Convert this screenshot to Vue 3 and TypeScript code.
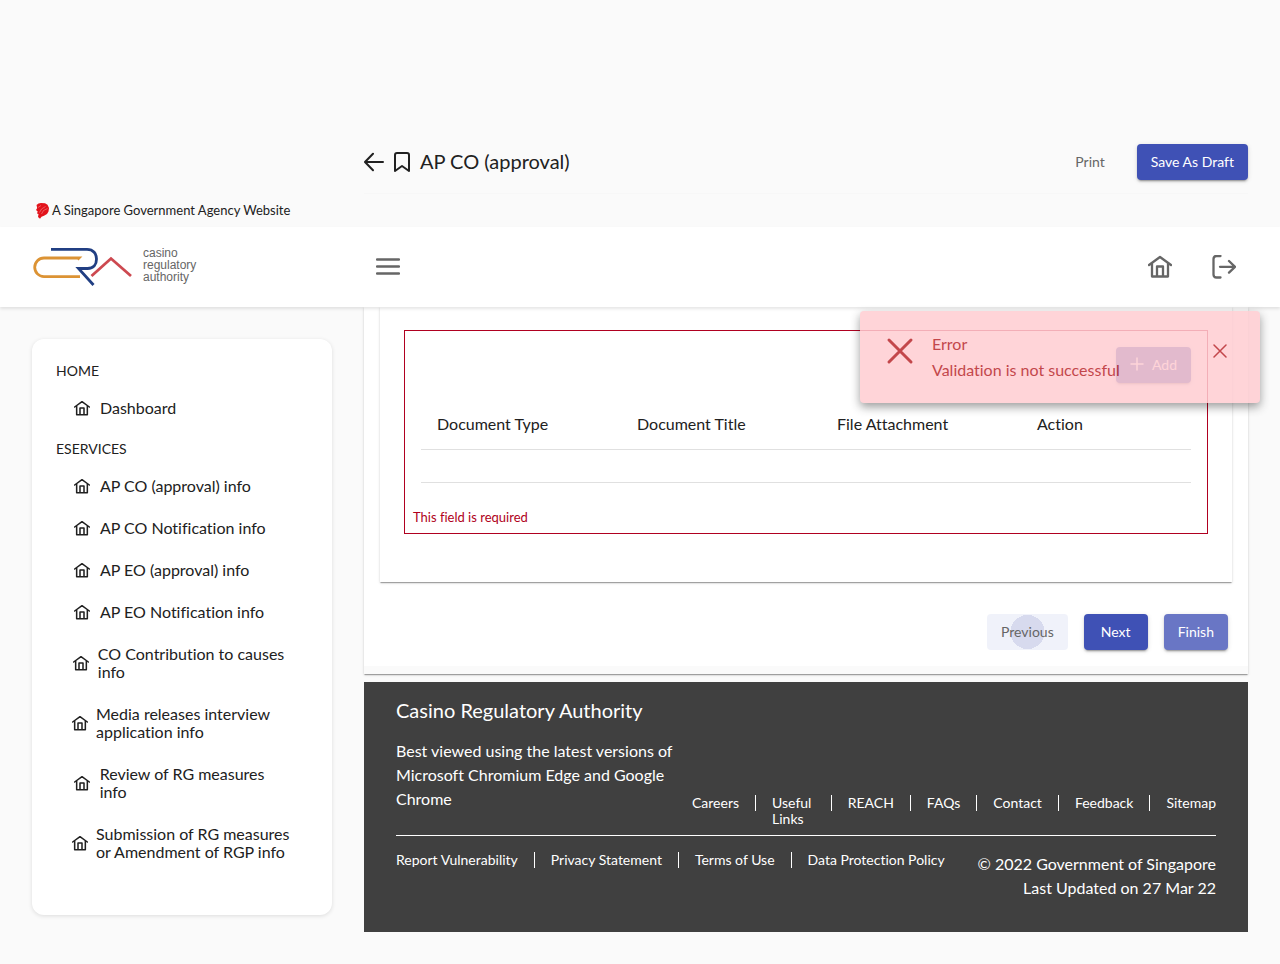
<script setup lang="ts">
import { ref } from 'vue'

interface MenuGroup {
  title: string
  items: string[]
}

const groups: MenuGroup[] = [
  { title: 'HOME', items: ['Dashboard'] },
  {
    title: 'ESERVICES',
    items: [
      'AP CO (approval) info',
      'AP CO Notification info',
      'AP EO (approval) info',
      'AP EO Notification info',
      'CO Contribution to causes info',
      'Media releases interview application info',
      'Review of RG measures info',
      'Submission of RG measures or Amendment of RGP info',
    ],
  },
]

const columns: string[] = ['Document Type', 'Document Title', 'File Attachment', 'Action']
const siteLinks: string[] = ['Careers', 'Useful Links', 'REACH', 'FAQs', 'Contact', 'Feedback', 'Sitemap']
const legalLinks: string[] = ['Report Vulnerability', 'Privacy Statement', 'Terms of Use', 'Data Protection Policy']

const toastOpen = ref(true)
</script>

<template>
  <div class="page">
    <div class="titlebar">
      <button class="icon-btn" type="button" aria-label="Back">
        <svg width="20" height="20" viewBox="0 0 20 20"><path d="M19 10H1.5M9 1.800L1 10l8 8.200" /></svg>
      </button>
      <button class="icon-btn bookmark" type="button" aria-label="Bookmark">
        <svg width="16" height="20" viewBox="0 0 16 20"><path d="M1 19V3q0-2 2-2h10q2 0 2 2v16l-7-5z" /></svg>
      </button>
      <h1>AP CO (approval)</h1>
      <div class="title-actions">
        <button class="btn flat" type="button">Print</button>
        <button class="btn primary" type="button">Save As Draft</button>
      </div>
    </div>

    <div class="agency">
      <svg width="16" height="18" viewBox="0 0 16 18" aria-hidden="true">
        <path fill="#e2131b" d="M1.500 3l2-1.500L6 1l4 .3 2.500 1.500L14 6l-.5 3.500-1.500 2.500-3 1.700-2.500 1-1.500 2-2-1.700.5-3-1.500-.5.700-2L1 8l1.200-2z" />
        <path fill="none" stroke="#fff" stroke-opacity=".6" stroke-width=".5" d="M3 5.500l3-2M4.500 10.500l2-3.500 4-2.500M6.500 12l2-3.500 4-2" />
      </svg>
      <a href="#">A Singapore Government Agency Website</a>
    </div>

    <header class="header">
      <a href="#" class="logo" aria-label="Casino Regulatory Authority">
        <svg width="168" height="44" viewBox="0 0 168 44">
          <g fill="none" stroke-width="2.800">
            <path stroke="#dc9334" d="M45.500 14.500l1.500-1.500H12a9.300 9.300 0 0 0 0 18.600H48" />
            <path stroke="#213f83" d="M19 4.300H55C61.500 4.300 64.500 9 64.500 14s-2.500 9.500-9 9.500H46.500L61.500 40" />
            <path stroke="#cd4950" d="M59.500 31L79 13.500 99 31" />
          </g>
          <g class="logo-text">
            <text x="111" y="12">casino</text>
            <text x="111" y="24">regulatory</text>
            <text x="111" y="36">authority</text>
          </g>
        </svg>
      </a>
      <button class="icon-btn menu" type="button" aria-label="Menu">
        <svg width="24" height="24" viewBox="0 0 24 24"><path d="M1 4.500h22M1 11.500h22M1 18.500h22" /></svg>
      </button>
      <div class="header-actions">
        <button class="icon-btn" type="button" aria-label="Home">
          <svg width="24" height="24" viewBox="0 0 24 24"><path d="M1 10L12 2l11 8M4 8.500V21.500h16V8.500M9 21V11.500h6V21" /></svg>
        </button>
        <button class="icon-btn" type="button" aria-label="Log out">
          <svg width="24" height="24" viewBox="0 0 24 24"><path d="M8.500 1H4.500Q1.500 1 1.500 4v15.500q0 3 3 3h4M8 11.800h15M17 6l6 5.800-6 5.800" /></svg>
        </button>
      </div>
    </header>

    <div class="body">
      <nav class="sidebar">
        <section v-for="g in groups" :key="g.title">
          <h2>{{ g.title }}</h2>
          <ul>
            <li v-for="item in g.items" :key="item">
              <a href="#">
                <span class="side-icon">
                  <svg width="16" height="16" viewBox="0 0 24 24"><path d="M1 10.500L12 2.500l11 8M4 9v13h16V9M9 22V12h6v10" /></svg>
                </span>
                <span>{{ item }}</span>
              </a>
            </li>
          </ul>
        </section>
      </nav>

      <div class="content">
        <main class="panel">
          <div class="card">
            <div class="field">
              <div class="add-row">
                <button class="btn primary add" type="button">
                  <svg width="14" height="14" viewBox="0 0 14 14"><path d="M7 1v12M1 7h12" /></svg>
                  Add
                </button>
              </div>
              <table>
                <thead>
                  <tr><th v-for="c in columns" :key="c" scope="col">{{ c }}</th></tr>
                </thead>
                <tbody>
                  <tr><td colspan="4"></td></tr>
                </tbody>
              </table>
              <p class="error">This field is required</p>
            </div>
          </div>
          <div class="steps">
            <button class="btn previous" type="button">Previous</button>
            <button class="btn primary" type="button">Next</button>
            <button class="btn primary light" type="button">Finish</button>
          </div>
        </main>

        <footer class="footer">
          <h2>Casino Regulatory Authority</h2>
          <div class="foot-top">
            <p>Best viewed using the latest versions of Microsoft Chromium Edge and Google Chrome</p>
            <ul class="links">
              <li v-for="l in siteLinks" :key="l"><a href="#">{{ l }}</a></li>
            </ul>
          </div>
          <div class="foot-bottom">
            <ul class="links">
              <li v-for="l in legalLinks" :key="l"><a href="#">{{ l }}</a></li>
            </ul>
            <p class="copy">© 2022 Government of Singapore<br />Last Updated on 27 Mar 22</p>
          </div>
        </footer>

      </div>
      <div v-if="toastOpen" class="toast" role="alert">
        <svg class="toast-icon" width="28" height="28" viewBox="0 0 28 28" aria-hidden="true"><path d="M3 3l22 22M25 3L3 25" /></svg>
        <div class="toast-text">
          <div>Error</div>
          <div>Validation is not successful</div>
        </div>
        <button class="icon-btn toast-close" type="button" aria-label="Close" @click="toastOpen = false">
          <svg width="14" height="14" viewBox="0 0 14 14"><path d="M1 1l12 12M13 1L1 13" /></svg>
        </button>
      </div>
    </div>
  </div>
</template>

<style>
body {
  margin: 0;
  background: #fafafa;
}
</style>

<style scoped>
.page {
  box-sizing: border-box;
  min-height: 100vh;
  padding-top: 144px;
  font-family: Lato, "Liberation Sans", sans-serif;
  font-size: 16px;
  font-variant-ligatures: none;
  color: #212121;
}
h1, h2, p, ul {
  margin: 0;
  padding: 0;
  font-weight: 400;
}
ul {
  list-style: none;
}
a {
  color: inherit;
  text-decoration: none;
}
svg {
  display: block;
  flex-shrink: 0;
}
.icon-btn {
  padding: 0;
  border: 0;
  background: none;
  color: inherit;
  cursor: pointer;
}
.icon-btn path, .side-icon path, .add path, .toast-icon path {
  fill: none;
  stroke: currentColor;
  stroke-width: 2;
  stroke-linecap: round;
  stroke-linejoin: round;
}
.header .icon-btn path, .side-icon path {
  stroke-width: 2.3;
}
.add path, .toast-close path {
  stroke-width: 1.5;
}
.titlebar {
  display: flex;
  align-items: center;
  margin: 0 32px 0 364px;
  padding-bottom: 13px;
  border-bottom: 1px solid #f7f7f7;
}
.bookmark {
  margin: 0 10px;
}
h1 {
  padding-bottom: 2px;
  font-size: 20px;
  line-height: 32px;
}
.title-actions {
  display: flex;
  gap: 18px;
  margin-left: auto;
}
.btn {
  display: inline-flex;
  align-items: center;
  justify-content: center;
  height: 36px;
  min-width: 64px;
  padding: 0 14px 2px;
  border: 0;
  border-radius: 4px;
  background: none;
  color: #666;
  font-family: inherit;
  font-size: 14px;
  font-variant-ligatures: inherit;
  white-space: nowrap;
  cursor: pointer;
}
.title-actions .flat {
  min-width: 0;
}
.primary {
  background: #3f51b5;
  color: #fff;
  box-shadow: 0 3px 1px -2px rgba(0, 0, 0, 0.2), 0 2px 2px rgba(0, 0, 0, 0.14), 0 1px 5px rgba(0, 0, 0, 0.12);
}
.light {
  background: #6976c5;
}
.previous {
  background: radial-gradient(circle at center, #d7daee 17px, #f0f2fa 17px);
}
.agency {
  display: flex;
  align-items: center;
  gap: 1px;
  height: 33px;
  padding-left: 35px;
  font-size: 13px;
}
.agency a {
  padding-bottom: 2px;
}
.header {
  position: relative;
  z-index: 2;
  display: flex;
  align-items: center;
  height: 80px;
  padding: 0 44px 0 32px;
  background: #fff;
  color: #666;
  box-shadow: 0 2px 3px rgba(0, 0, 0, 0.1);
}
.logo {
  width: 344px;
}
.logo-text {
  fill: #666;
  font-family: "Liberation Sans", sans-serif;
  font-size: 12px;
}
.header-actions {
  display: flex;
  gap: 40px;
  margin-left: auto;
}
.body {
  position: relative;
  display: flex;
  align-items: flex-start;
  gap: 32px;
  padding: 0 32px 32px;
}
.sidebar {
  box-sizing: border-box;
  flex: none;
  width: 300px;
  margin-top: 32px;
  padding: 12px 24px 42px;
  border-radius: 12px;
  background: #fff;
  box-shadow: 0 1px 4px rgba(0, 0, 0, 0.12);
}
.sidebar h2 {
  padding: 12px 0 8px;
  font-size: 14px;
  line-height: 16px;
}
.sidebar a {
  display: flex;
  align-items: center;
  padding: 12px 16px;
  line-height: 18px;
}
.side-icon {
  display: flex;
  justify-content: center;
  width: 20px;
  margin-right: 8px;
}
.content {
  flex: 1;
  min-width: 0;
}
.panel {
  padding: 0 16px 16px;
  border-bottom: 8px solid #fafafa;
  background: #fff;
  box-shadow: 0 2px 1px -1px rgba(0, 0, 0, 0.2), 0 1px 1px rgba(0, 0, 0, 0.14), 0 1px 3px rgba(0, 0, 0, 0.12);
}
.card {
  padding: 23px 24px 48px;
  background: #fff;
  box-shadow: 0 2px 1px -1px rgba(0, 0, 0, 0.2), 0 1px 1px rgba(0, 0, 0, 0.14), 0 1px 3px rgba(0, 0, 0, 0.12);
}
.field {
  padding: 16px 16px 8px;
  border: 1px solid #b00020;
}
.add-row {
  display: flex;
  justify-content: flex-end;
  margin-bottom: 16px;
}
.add {
  gap: 8px;
}
table {
  width: 100%;
  border-collapse: separate;
  border-spacing: 0;
  table-layout: fixed;
}
th, td {
  padding: 16px;
  border-bottom: 1px solid #e0e0e0;
  font-weight: 400;
  line-height: 18px;
  text-align: left;
}
th {
  width: 168px;
}
th:last-child {
  width: auto;
}
.error {
  margin: 26px 0 0 -8px;
  color: #b00020;
  font-size: 13px;
  line-height: 16px;
}
.steps {
  display: flex;
  justify-content: flex-end;
  gap: 16px;
  padding: 32px 4px 0 0;
}
.footer {
  margin-top: 8px;
  padding: 16px 32px 32px;
  background: #404040;
  color: #fff;
}
.footer h2 {
  margin-bottom: 16px;
  font-size: 20px;
  line-height: 25px;
}
.footer p {
  line-height: 24px;
}
.foot-top {
  display: flex;
  align-items: flex-end;
  justify-content: space-between;
  gap: 16px;
  padding-bottom: 8px;
  border-bottom: 1px solid #fff;
}
.foot-top p {
  flex: 0 0 280px;
  margin-bottom: 16px;
}
.links {
  display: flex;
  align-items: flex-start;
  font-size: 14px;
  line-height: 16px;
}
.links li {
  display: flex;
}
.links li + li::before {
  content: "";
  flex: none;
  width: 1px;
  height: 16px;
  margin: 0 16px;
  background: #fff;
}
.foot-bottom {
  display: flex;
  justify-content: space-between;
  padding-top: 16px;
}
.foot-bottom .copy {
  text-align: right;
}
.toast {
  position: absolute;
  z-index: 3;
  top: 4px;
  right: 20px;
  box-sizing: border-box;
  display: flex;
  align-items: flex-start;
  width: 400px;
  padding: 20px 33px 20px 26px;
  border-radius: 4px;
  background: #ffcdd2;
  color: #b9272c;
  box-shadow: 0 4px 10px rgba(0, 0, 0, 0.45);
  opacity: 0.85;
}
.toast-icon {
  margin-top: 6px;
}
.toast-icon path {
  stroke-width: 3;
}
.toast-text {
  flex: 1;
  margin-left: 18px;
  line-height: 26px;
}
.toast-close {
  margin-top: 13px;
}
</style>
